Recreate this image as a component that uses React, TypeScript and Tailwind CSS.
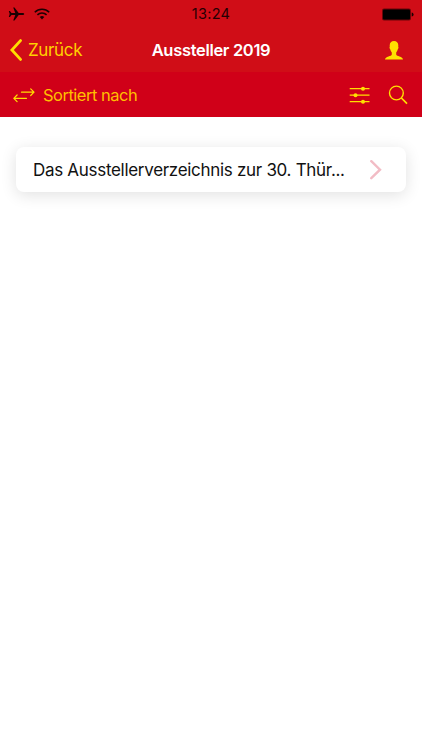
const ACCENT = "#ffdf00"

function PlaneIcon() {
  return (
    <svg width="17" height="14" viewBox="0 0 17 14" fill="#1c0002">
      <path d="M16.2 7c0-.6-.8-1-1.8-1h-3.7L6.5.6H5.2L7.3 6H3.5L1.9 4.1H.8L1.7 7 .8 9.9h1.1L3.5 8h3.8l-2.1 5.4h1.3L10.7 8h3.7c1 0 1.8-.4 1.8-1z" />
    </svg>
  )
}

function WifiIcon() {
  return (
    <svg width="16" height="12" viewBox="0 0 16 12" fill="none" stroke="#1c0002" strokeWidth="1.6">
      <path d="M.8 4.2a10.3 10.3 0 0 1 14.4 0" />
      <path d="M3.4 6.9a6.6 6.6 0 0 1 9.2 0" />
      <path d="M5.7 9.1a3.4 3.4 0 0 1 4.6 0L8 11.4z" fill="#1c0002" stroke="none" />
    </svg>
  )
}

function BatteryIcon() {
  return (
    <svg width="33" height="13" viewBox="0 0 33 13">
      <rect x="1" y=".5" width="29" height="12" rx="2" fill="#6b0509" />
      <rect x="2" y="1.5" width="27" height="10" rx="1" fill="#000" />
      <path d="M30.7 4.4c1.2.3 1.9 1.1 1.9 2.1s-.7 1.8-1.9 2.1z" fill="#1c0002" />
    </svg>
  )
}

function UserIcon() {
  return (
    <svg width="18" height="19" viewBox="0 0 18 19" fill={ACCENT}>
      <path d="M9 0C6.4 0 4.700 1.700 4.700 4.500c0 .5 0 1 .1 1.400-.5.200-.4 1.100.3 2.200.4 1.600 1 2.600 1.700 3.300v2.200c-.3 1-1.700 1.400-3.300 1.900C1.500 16.100.2 16.900 0 18.600h18c-.2-1.700-1.500-2.500-3.500-3.100-1.600-.5-3-.9-3.300-1.900v-2.200c.7-.7 1.300-1.700 1.700-3.300.7-1.100.8-2 .3-2.200.1-.4.1-.9.1-1.400C13.300 1.700 11.600 0 9 0z" />
    </svg>
  )
}

function SortIcon() {
  return (
    <svg width="22" height="15" viewBox="0 0 22 15" fill="none" stroke={ACCENT} strokeWidth="1.2" strokeLinecap="round" strokeLinejoin="round">
      <path d="M8.5 4.2H21M17.7.9 21 4.200l-3.300 3.300" />
      <path d="M13.5 10.3H.8M4.100 7 .8 10.300l3.300 3.300" />
    </svg>
  )
}

function FilterIcon() {
  return (
    <svg width="21" height="19" viewBox="0 0 21 19" fill={ACCENT}>
      <path d="M.7 2h19.800v1.300H.7zM.7 8.500h19.800v1.300H.7zM.7 15h19.800v1.300H.7z" />
      <circle cx="14" cy="2.65" r="2" />
      <circle cx="6.5" cy="9.15" r="2" />
      <circle cx="14" cy="15.65" r="2" />
    </svg>
  )
}

function SearchIcon() {
  return (
    <svg width="20" height="20" viewBox="0 0 20 20" fill="none" stroke={ACCENT} strokeWidth="1.4">
      <circle cx="8.4" cy="8" r="6.9" />
      <path d="m13.400 13 5.600 5.600" strokeWidth="1.7" />
    </svg>
  )
}

function StatusBar() {
  return (
    <div className="grid h-7 grid-cols-3 items-center px-[8px]">
      <div className="flex items-center gap-[9px]">
        <PlaneIcon />
        <WifiIcon />
      </div>
      <span className="text-center text-[14.5px] leading-none tracking-[0.3px] text-[#250003]">13:24</span>
      <div className="flex justify-end">
        <BatteryIcon />
      </div>
    </div>
  )
}

function NavBar() {
  return (
    <header className="grid h-11 grid-cols-[1fr_auto_1fr] items-center px-[10px]">
      <button className="flex items-center gap-[6px] text-[17px] tracking-[-0.35px] text-[#ffd000]">
        <svg width="12" height="22" viewBox="0 0 12 22" fill="none" stroke={ACCENT} strokeWidth="2.8" strokeLinecap="round">
          <path d="M10.500 1.600 1.900 11l8.600 9.400" />
        </svg>
        <span className="pt-[2px]">Zurück</span>
      </button>
      <h1 className="pt-px text-[16.5px] font-semibold tracking-[-0.32px] text-white">Aussteller 2019</h1>
      <button className="flex justify-end pt-px pr-[9px]">
        <UserIcon />
      </button>
    </header>
  )
}

function Toolbar() {
  return (
    <div className="flex h-[45px] items-center justify-between bg-[#d00018] pt-px pr-[14px] pl-[13px]">
      <button className="flex items-center gap-[8px] text-[16.5px] tracking-[-0.5px] text-[#ffbf00]">
        <SortIcon />
        <span className="pt-px">Sortiert nach</span>
      </button>
      <div className="flex items-center gap-[18px]">
        <FilterIcon />
        <SearchIcon />
      </div>
    </div>
  )
}

export default function App() {
  return (
    <div className="h-[750px] w-[422px] overflow-hidden bg-white font-['Inter','Liberation_Sans',sans-serif]">
      <div className="bg-[#d00d17]">
        <StatusBar />
        <NavBar />
      </div>
      <Toolbar />

      <main className="px-4 pt-[30px]">
        <div className="flex h-[45px] items-center justify-between rounded-lg bg-white pr-[24px] pl-[17px] shadow-[0_3px_16px_rgba(0,0,0,0.12)]">
          <span className="pt-[2px] text-[17px] tracking-[-0.3px] whitespace-nowrap text-[#111]">
            Das Ausstellerverzeichnis zur 30. Thür...
          </span>
          <svg width="12" height="20" viewBox="0 0 12 20" fill="none" stroke="#f2bcc5" strokeWidth="2.4" strokeLinecap="round">
            <path d="m1.300 1.200 8.700 8.500-8.700 8.500" />
          </svg>
        </div>
      </main>
    </div>
  )
}
